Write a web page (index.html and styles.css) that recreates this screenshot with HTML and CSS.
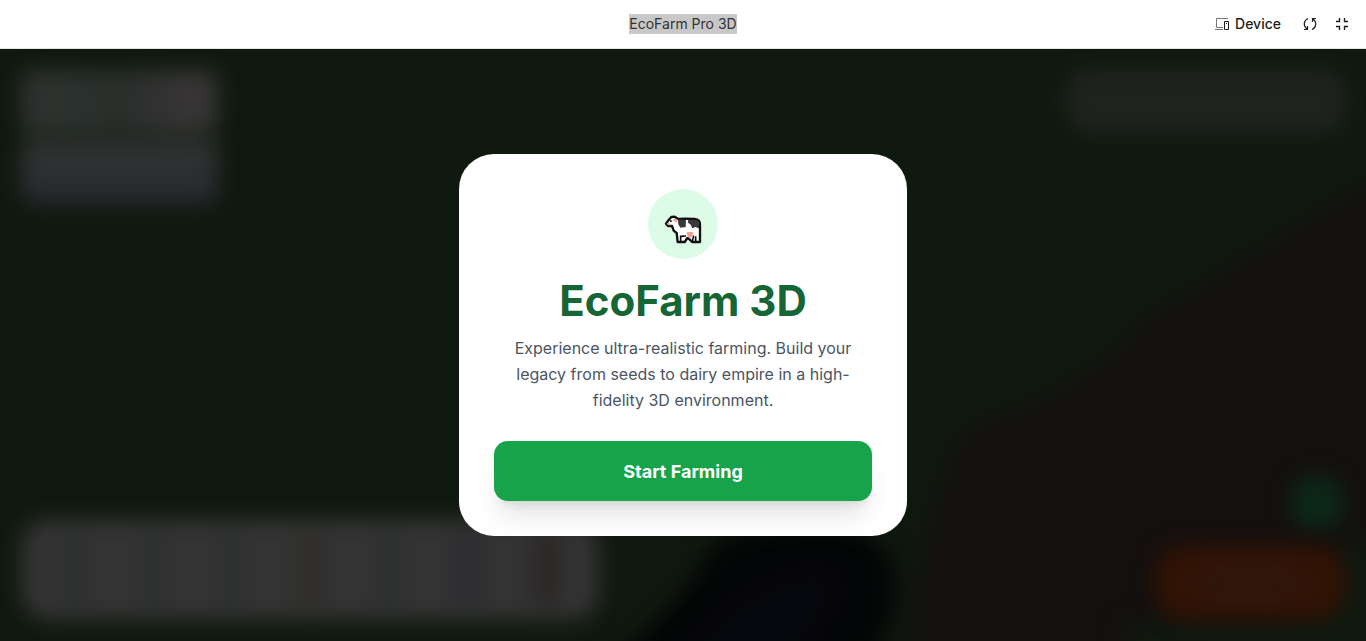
FILE: index.html
```
<!DOCTYPE html>
<html lang="en">
	<head>
		<meta charset="utf-8">
		<meta name="viewport" content="width=device-width, initial-scale=1">
		<title>EcoFarm Pro 3D</title>
		<link rel="stylesheet" href="styles.css">
	</head>
	<body>
		<header class="topbar">
			<span class="topbar-title">EcoFarm Pro 3D</span>
			<div class="topbar-actions">
				<button class="device" type="button">
					<svg width="16" height="16" viewBox="0 0 16 16" fill="none" stroke="currentColor">
						<path d="M14 2.500H2.500v9" stroke="#777" />
						<path d="M1 13.500h8M2.500 11.500h6.500" stroke="#777" />
						<path d="M10.500 5.500h4v8h-4z" />
						<path d="M12 7.500h1" />
					</svg>
					Device
				</button>
				<button class="icon-button" type="button" aria-label="Reload">
					<svg width="16" height="16" viewBox="0 0 16 16" fill="none" stroke="currentColor" stroke-width="1.200">
						<path d="M6 2.500C1.500 4.500 1 10 5 13M2 13.500h3.500V10" />
						<path d="M10 13.500c4.500-2 5-7.500 1-10.500M14 2.500h-3.500V6" />
					</svg>
				</button>
				<button class="icon-button" type="button" aria-label="Exit full screen">
					<svg width="16" height="16" viewBox="0 0 16 16" fill="none" stroke="currentColor" stroke-width="1.400">
						<path d="M2 5.500h3.500V2M10.500 2v3.500H14M2 10.500h3.500V14M10.500 14v-3.500H14" />
					</svg>
				</button>
			</div>
		</header>
		<main class="game">
			<svg class="scene" viewBox="0 0 1366 592" preserveAspectRatio="none" aria-hidden="true">
				<path class="soil" d="M1400 115L1140 275Q1115 325 970 380Q925 430 905 640H1400z" />
				<path class="grass" d="M1125 640V575L1300 565L1345 490H1400V640z" />
				<path class="pond-edge" d="M600 620Q680 560 710 500Q740 470 850 480Q900 490 896 550Q890 590 850 640H600z" />
				<path class="pond" d="M680 610Q740 520 830 520Q870 540 760 640z" />
			</svg>
			<div class="hud" aria-hidden="true">
				<div class="hud-row">
					<div class="stats">
						<div class="stat"></div>
						<div class="stat stat-blue"></div>
					</div>
					<div class="hint"></div>
				</div>
				<div class="hud-row hud-bottom">
					<div class="tools">
						<i></i><i></i><i></i><i></i><i></i><i></i><i></i>
					</div>
					<div class="side">
						<div class="round"></div>
						<div class="market"></div>
					</div>
				</div>
			</div>
			<section class="card">
				<div class="badge">
					<svg viewBox="0 0 210 210" role="img" aria-label="Cow">
						<path d="M54 104L62 93L70 84L80 83L91 90L112 89L140 90Q156 92 156 106V159H132L126 152L118 147L110 159H89L86 132L77 125L72 111H60z" fill="#fff" stroke="#111" stroke-width="7" stroke-linejoin="round" />
						<path d="M90 92h24l-1 22-16 2-6-10zM121 93h24q8 2 8 14v11l-11-4-9 4-5-11-9-7z" fill="#383838" />
						<path d="M56 103l7-2 5 8h-8zM77 88l11 4-2 8-9-4zM116 130l19-1-1 10-7 8-8-5z" fill="#f29a8c" />
						<path d="M66 94h5v5h-5z" fill="#111" />
						<path d="M98 157v-15l16-1M133 157l4-17M143 157v-15" fill="none" stroke="#111" stroke-width="5" />
					</svg>
				</div>
				<h1>EcoFarm 3D</h1>
				<p>Experience ultra-realistic farming. Build your legacy from seeds to dairy empire in a high-fidelity 3D environment.</p>
				<button class="start" type="button">Start Farming</button>
			</section>
		</main>
	</body>
</html>
```

FILE: styles.css
```
* {
  box-sizing: border-box;
}

body {
  display: flex;
  flex-direction: column;
  min-height: 100vh;
  margin: 0;
  background: #10190f;
  font-family: Inter, "Liberation Sans", sans-serif;
}

button {
  border: 0;
  font-family: inherit;
  cursor: pointer;
}

/* top bar */
.topbar {
  display: grid;
  grid-template-columns: 1fr auto 1fr;
  align-items: center;
  height: 49px;
  padding: 0 16px;
  border-bottom: 1px solid #e1e4e1;
  background: #fff;
  color: #1f1f1f;
  font-size: 14px;
  line-height: 20px;
}

.topbar-title {
  grid-column: 2;
  background: #c8c8c8;
  color: #333;
}

.topbar-actions {
  display: flex;
  justify-content: flex-end;
  gap: 16px;
}

.topbar-actions button {
  display: flex;
  align-items: center;
  gap: 5px;
  padding: 0;
  background: none;
  color: inherit;
  font-size: 14px;
  font-weight: 500;
  line-height: 20px;
}

.topbar-actions .device {
  margin-right: 5px;
}

/* game */
.game {
  display: grid;
  flex: 1;
  overflow: hidden;
  position: relative;
  place-items: center;
}

.scene,
.hud {
  position: absolute;
  inset: 0;
  width: 100%;
  height: 100%;
}

.scene path {
  filter: blur(12px);
}

.soil {
  fill: #14100f;
}

.grass {
  fill: #10190f;
}

.pond-edge {
  fill: #040506;
}

.pond {
  fill: #07080d;
}

.hud {
  display: flex;
  flex-direction: column;
  justify-content: space-between;
  padding: 21px;
}

.hud-row {
  display: flex;
  justify-content: space-between;
}

.hud-bottom {
  align-items: flex-end;
}

.stats,
.hint,
.tools,
.round,
.market {
  filter: blur(10px);
}

.stats {
  display: grid;
  gap: 14px;
  border-radius: 14px;
  background: #1f2520;
}

.stat {
  width: 197px;
  height: 60px;
  border-radius: 14px;
  background: linear-gradient(90deg, #303130, #2b322e 25%, #292e2b 50%, #363434 80%);
}

.stat-blue {
  background: linear-gradient(#333433, #272830);
}

.hint {
  width: 278px;
  height: 62px;
  border-radius: 21px;
  background: #1f231f;
}

.tools {
  display: flex;
  justify-content: space-between;
  width: 578px;
  height: 101px;
  padding: 14px 40px;
  border-radius: 28px;
  background: #333;
}

.tools i {
  width: 26px;
  background: #2e3030;
}

.tools i:nth-child(4) {
  background: #302e2a;
}

.tools i:nth-child(6) {
  background: #2c2d31;
}

.tools i:nth-child(7) {
  background: #2b2726;
}

.side {
  display: flex;
  flex-direction: column;
  align-items: flex-end;
  gap: 14px;
}

.round {
  width: 56px;
  height: 56px;
  border-radius: 50%;
  background: #0c2718;
}

.market {
  width: 190px;
  height: 75px;
  border-radius: 28px;
  background: radial-gradient(#30190d, #311204 70%);
}

/* start card */
.card {
  position: relative;
  width: 100%;
  max-width: 448px;
  padding: 35px;
  border-radius: 35px;
  background: #fff;
  text-align: center;
}

.badge {
  width: 70px;
  height: 70px;
  margin: 0 auto 21px;
  border-radius: 50%;
  background: #dcfce7;
}

.badge svg {
  display: block;
}

.card h1 {
  margin: 0 0 13px;
  color: #166534;
  font-size: 42px;
  line-height: 42px;
}

.card p {
  margin: 0 0 28px;
  color: #4b5563;
  font-size: 16px;
  line-height: 26px;
}

.start {
  width: 100%;
  height: 60px;
  border-radius: 14px;
  background: #16a34a;
  box-shadow: 0 20px 25px -5px rgba(0, 0, 0, 0.1), 0 8px 10px -6px rgba(0, 0, 0, 0.1);
  color: #fff;
  font-size: 18px;
  font-weight: 700;
}
```
